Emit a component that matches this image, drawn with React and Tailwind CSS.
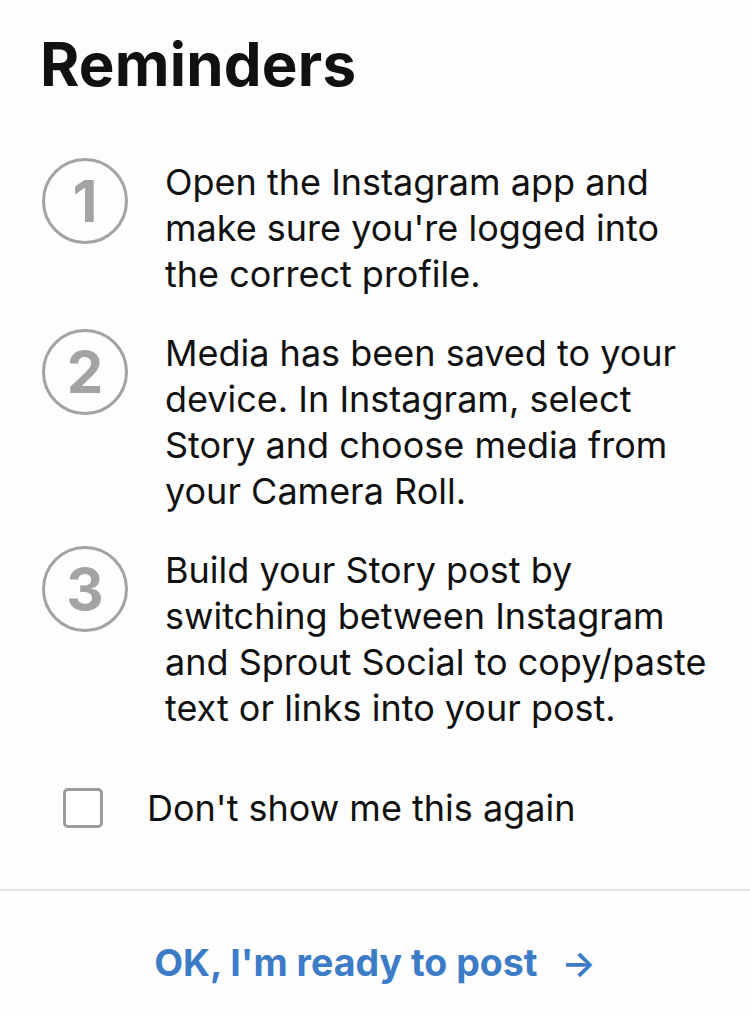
import React from "react";

const steps = [
  ["Open the Instagram app and", "make sure you're logged into", "the correct profile."],
  [
    "Media has been saved to your",
    "device. In Instagram, select",
    "Story and choose media from",
    "your Camera Roll.",
  ],
  [
    "Build your Story post by",
    "switching between Instagram",
    "and Sprout Social to copy/paste",
    "text or links into your post.",
  ],
];

export default function App() {
  return (
    <div
      className="min-h-screen bg-[#fdfdfd] text-[#111111]"
      style={{ fontFamily: "Inter, 'Noto Sans', sans-serif" }}
    >
      <h1 className="px-[40px] pt-[32px] text-[60px] font-bold leading-[64px] tracking-[0.2px]">
        Reminders
      </h1>

      <ol className="mt-[62px] flex flex-col gap-[32px] pl-[42px] pr-2">
        {steps.map((lines, i) => (
          <li key={i} className="flex items-start">
            <div className="flex h-[86px] w-[86px] shrink-0 items-center justify-center rounded-full border-[3px] border-[#a3a3a3] text-[58px] font-bold text-[#a3a3a3]">
              {i + 1}
            </div>
            <p className="ml-[37px] mt-[1px] text-[36px] leading-[46px]">
              {lines.map((l) => (
                <span key={l} className="block whitespace-nowrap">
                  {l}
                </span>
              ))}
            </p>
          </li>
        ))}
      </ol>

      <label className="mt-[57px] flex items-center pl-[63px]">
        <span className="h-[40px] w-[40px] shrink-0 rounded-[5px] border-[3px] border-[#9c9c9c] bg-white" />
        <span className="ml-[44px] text-[36px] leading-[40px]">
          Don't show me this again
        </span>
      </label>

      <div className="mt-[61px] h-[2px] bg-[#e4e4e4]" />

      <button className="flex w-full items-center justify-center pt-[52px] text-[37.5px] font-bold leading-[40px] text-[#3c7cc7]">
        OK, I'm ready to post
        <span className="ml-[24px] text-[36px] font-semibold">→</span>
      </button>
    </div>
  );
}
